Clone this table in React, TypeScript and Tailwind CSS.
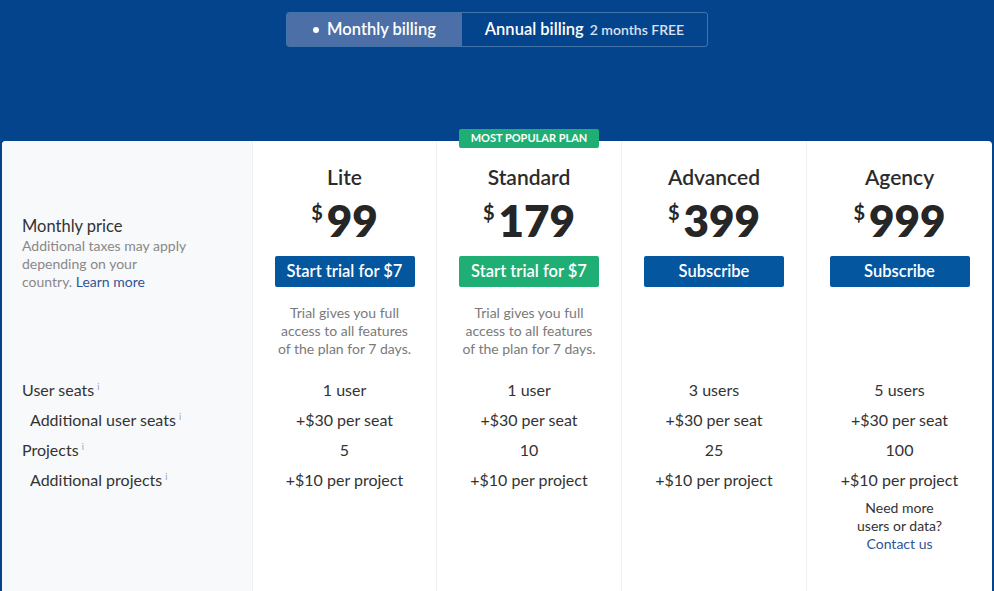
const plans = [
  { name: 'Lite', price: '99', cta: 'Start trial for $7', green: false, trial: true, seats: '1 user', projects: '5' },
  { name: 'Standard', price: '179', cta: 'Start trial for $7', green: true, trial: true, seats: '1 user', projects: '10', popular: true },
  { name: 'Advanced', price: '399', cta: 'Subscribe', green: false, trial: false, seats: '3 users', projects: '25' },
  { name: 'Agency', price: '999', cta: 'Subscribe', green: false, trial: false, seats: '5 users', projects: '100', contact: true },
];

function Info() {
  return <sup className="ml-[3px] text-[9px] text-gray-400 top-[-6px]">i</sup>;
}

const rows = [
  { label: 'User seats', sub: false, key: 'seats' },
  { label: 'Additional user seats', sub: true, key: 'seat' },
  { label: 'Projects', sub: false, key: 'projects' },
  { label: 'Additional projects', sub: true, key: 'project' },
];

function value(plan: any, key: string) {
  if (key === 'seat') return '+$30 per seat';
  if (key === 'project') return '+$10 per project';
  return plan[key];
}

export default function App() {
  return (
    <div className="min-h-[591px] overflow-hidden bg-[#03448c] font-['Lato','Noto_Sans',sans-serif] text-[#333]">
      <div className="flex justify-center pt-3">
        <div className="flex h-[35px] w-[422px] overflow-hidden rounded-[3px] border border-white/25">
          <div className="flex w-[175px] items-center justify-center gap-[8px] bg-[#4b6fa6] text-white">
            <span className="h-[6px] w-[6px] rounded-full bg-white" />
            <span className="text-[16.5px] font-semibold">Monthly billing</span>
          </div>
          <div className="flex flex-1 items-center justify-center gap-[6px] text-white">
            <span className="text-[16.5px] font-semibold">Annual billing</span>
            <span className="text-[14px] font-semibold text-white/85">2 months FREE</span>
          </div>
        </div>
      </div>

      <div className="mx-[2px] mt-[94px] grid grid-cols-[250px_184px_185px_185px_1fr] rounded-t-[4px] bg-white">
        {/* header row */}
        <div className="rounded-tl-[4px] bg-[#f8f9fb] pl-5 pt-[74px]">
          <p className="text-[16.5px] leading-[22px] text-[#333]">Monthly price</p>
          <p className="text-[14px] leading-[18px] text-[#888]">
            Additional taxes may apply
            <br />
            depending on your
            <br />
            country. <a className="text-[#2f5596]">Learn more</a>
          </p>
        </div>
        {plans.map((p) => (
          <div key={p.name} className="relative flex flex-col items-center border-l border-[#f0f0f0] pb-[17px] pt-[22px]">
            {p.popular && (
              <div className="absolute left-1/2 top-[-12px] flex h-[19px] w-[140px] -translate-x-1/2 items-center justify-center rounded-[2px] bg-[#1fae74] text-[11px] font-bold text-white">
                MOST POPULAR PLAN
              </div>
            )}
            <h3 className="text-[21px] font-semibold leading-[28px] text-[#2b2b2b]">{p.name}</h3>
            <div className="mt-[1px] flex h-[56px] items-start text-[#262626]">
              <span className="mr-[4px] mt-[5px] text-[20px] font-bold">$</span>
              <span className="text-[44px] font-extrabold leading-[56px]">{p.price}</span>
            </div>
            <button className={`mt-[8px] h-[31px] w-[140px] rounded-[2px] text-[16.5px] font-semibold text-white ${p.green ? 'bg-[#1fae74]' : 'bg-[#04569f]'}`}>
              {p.cta}
            </button>
            {p.trial && (
              <p className="mt-[17px] w-[140px] text-center text-[14px] leading-[18px] text-[#7a7a7a]">
                Trial gives you full access to all features of the plan for 7 days.
              </p>
            )}
          </div>
        ))}

        {rows.map((r) => (
          <>
            <div key={r.label} className={`flex h-[30px] items-center bg-[#f8f9fb] text-[16px] ${r.sub ? 'pl-[28px]' : 'pl-[20px]'}`}>
              <span>
                {r.label}
                <Info />
              </span>
            </div>
            {plans.map((p) => (
              <div key={p.name + r.key} className="flex h-[30px] items-center justify-center border-l border-[#f0f0f0] text-[16px]">
                {value(p, r.key)}
              </div>
            ))}
          </>
        ))}

        <div className="h-[110px] bg-[#f8f9fb]" />
        <div className="border-l border-[#f0f0f0]" />
        <div className="border-l border-[#f0f0f0]" />
        <div className="border-l border-[#f0f0f0]" />
        <div className="flex flex-col items-center border-l border-[#f0f0f0] pt-[4px] text-center text-[14px] leading-[18px]">
          <p>Need more<br />users or data?</p>
          <a className="text-[#2f5596]">Contact us</a>
        </div>
      </div>
    </div>
  );
}
